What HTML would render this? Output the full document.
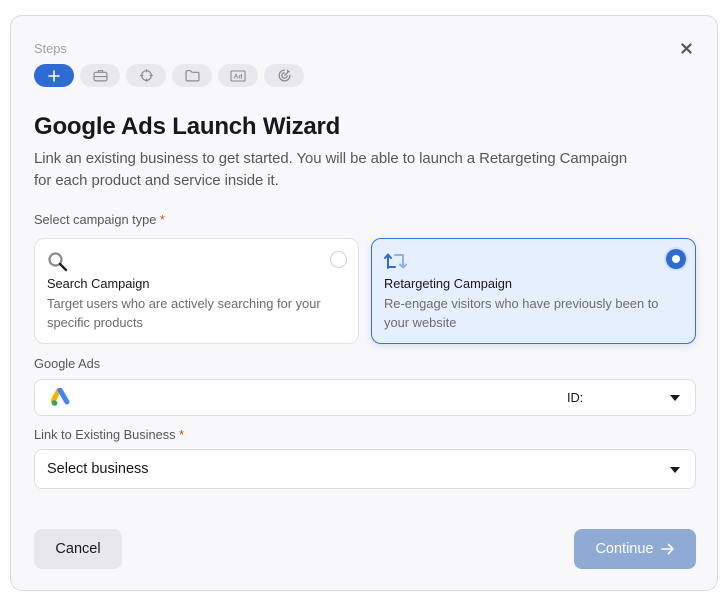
<!DOCTYPE html>
<html><head><meta charset="utf-8">
<style>
*{box-sizing:border-box;margin:0;padding:0}
body{width:720px;height:593px;background:#fff;font-family:"Liberation Sans",sans-serif;position:relative;overflow:hidden;color:#18181b}
.modal{position:absolute;left:10px;top:15px;width:708px;height:576px;background:#f8f8fb;border:1px solid #dcdce0;border-radius:12px}
.a{position:absolute}
.pill{position:absolute;top:64px;width:40px;height:23px;border-radius:12px;background:#e8e8ee;display:flex;align-items:center;justify-content:center}
.card{position:absolute;top:238px;height:106px;border-radius:10px;border:1px solid #e2e2e6;background:#fff}
.ct{position:absolute;left:12px;top:37px;font-size:12.8px;color:#18181b}
.cd{position:absolute;left:12px;top:55px;font-size:12.9px;line-height:19px;color:#6b6b73;width:290px}
.lbl{position:absolute;left:34px;font-size:12.8px;color:#56565e}
.star{color:#d9481b}
.sel{position:absolute;left:34px;width:662px;background:#fff;border:1px solid #dedee2;border-radius:8px}
.tri{position:absolute;right:15px;width:0;height:0;border-left:5px solid transparent;border-right:5px solid transparent;border-top:6px solid #18181b}
</style></head><body>
<div class="modal"></div>
<div class="a" style="left:34px;top:41px;font-size:12.8px;color:#a0a0a8">Steps</div>
<svg class="a" style="left:681px;top:43px" width="11" height="11" viewBox="0 0 11 11"><path d="M1.5 1.5L9.5 9.5M9.5 1.5L1.5 9.5" stroke="#555" stroke-width="2.2" stroke-linecap="round"/></svg>
<div class="pill" style="left:34px;background:#2f6bd4"><svg width="12" height="12" viewBox="0 0 12 12"><path d="M6 1v10M1 6h10" stroke="#fff" stroke-width="1.6" stroke-linecap="round"/></svg></div>
<div class="pill" style="left:80px"><svg width="15" height="13" viewBox="0 0 14 12"><rect x="1" y="3" width="12" height="8" rx="1.5" fill="none" stroke="#8a8a92" stroke-width="1.1"/><path d="M5 3V1.5h4V3M1 7h12" stroke="#8a8a92" stroke-width="1.1" fill="none"/></svg></div>
<div class="pill" style="left:126px"><svg width="15" height="15" viewBox="0 0 14 14"><circle cx="7" cy="7" r="4.5" fill="none" stroke="#8a8a92" stroke-width="1.1"/><path d="M7 1v3M7 10v3M1 7h3M10 7h3" stroke="#8a8a92" stroke-width="1.1"/></svg></div>
<div class="pill" style="left:172px"><svg width="15" height="13" viewBox="0 0 14 12"><path d="M1 2.5a1 1 0 0 1 1-1h3l1.5 1.5H12a1 1 0 0 1 1 1V10a1 1 0 0 1-1 1H2a1 1 0 0 1-1-1z" fill="none" stroke="#8a8a92" stroke-width="1.1"/></svg></div>
<div class="pill" style="left:218px"><svg width="16" height="12" viewBox="0 0 16 12"><rect x="1" y="1" width="14" height="10" rx="1" fill="none" stroke="#8a8a92" stroke-width="1.1"/><text x="8" y="8.5" font-size="6.5" font-family="Liberation Sans" font-weight="bold" fill="#8a8a92" text-anchor="middle">Ad</text></svg></div>
<div class="pill" style="left:264px"><svg width="15" height="15" viewBox="0 0 14 14"><path d="M12 6.5A5 5 0 1 1 7.5 2" fill="none" stroke="#8a8a92" stroke-width="1.2"/><path d="M9.5 6.8A2.5 2.5 0 1 1 7.2 4.5" fill="none" stroke="#8a8a92" stroke-width="1.2"/><path d="M7 7L11 3M10 1.5v2h2" stroke="#8a8a92" stroke-width="1.2" fill="none"/></svg></div>
<div class="a" style="left:34px;top:113px;font-size:24px;font-weight:bold;letter-spacing:-0.2px;color:#18181b">Google Ads Launch Wizard</div>
<div class="a" style="left:34px;top:148px;font-size:14.9px;line-height:22px;color:#56565e;width:660px;letter-spacing:-0.05px">Link an existing business to get started. You will be able to launch a Retargeting Campaign<br>for each product and service inside it.</div>
<div class="lbl" style="top:212px">Select campaign type <span class="star">*</span></div>
<div class="card" style="left:34px;width:325px">
 <svg class="a" style="left:12px;top:12px" width="22" height="22" viewBox="0 0 22 22"><circle cx="8.5" cy="8.5" r="6" fill="none" stroke="#8a8a8a" stroke-width="2.2"/><path d="M13 13l6 6" stroke="#222" stroke-width="2.4" stroke-linecap="round"/></svg>
 <div class="a" style="left:295px;top:12px;width:17px;height:17px;border-radius:50%;border:1px solid #cfcfd4;background:#fff"></div>
 <div class="ct">Search Campaign</div>
 <div class="cd">Target users who are actively searching for your specific products</div>
</div>
<div class="card" style="left:371px;width:325px;background:#e6effd;border-color:#3a73d8;box-shadow:0 2px 8px rgba(60,110,210,.18)">
 <svg class="a" style="left:12px;top:13px" width="24" height="18" viewBox="0 0 24 18"><path d="M4 16V3M1 6l3-3.5L7 6M4 15h7" fill="none" stroke="#2f6bd4" stroke-width="2" stroke-linecap="round" stroke-linejoin="round"/><path d="M11 3h8v12M16 12.5l3 3 3-3" fill="none" stroke="#8fb0e8" stroke-width="2" stroke-linecap="round" stroke-linejoin="round"/></svg>
 <div class="a" style="left:294px;top:10px;width:20px;height:20px;border-radius:50%;background:#2f6bd4;box-shadow:0 0 0 2px #d3e1f8"><div style="position:absolute;left:6px;top:6px;width:8px;height:8px;border-radius:50%;background:#fff"></div></div>
 <div class="ct">Retargeting Campaign</div>
 <div class="cd">Re-engage visitors who have previously been to your website</div>
</div>
<div class="lbl" style="top:356px">Google Ads</div>
<div class="sel" style="top:379px;height:37px">
 <svg class="a" style="left:16px;top:8px" width="20" height="19" viewBox="0 0 20 19"><path d="M8 2l-6 11" stroke="#f4b400" stroke-width="5" stroke-linecap="round"/><path d="M9 2l7 12" stroke="#4285f4" stroke-width="5" stroke-linecap="round"/><circle cx="3.5" cy="15" r="2.8" fill="#34a853"/></svg>
 <div class="a" style="left:532px;top:10px;font-size:12.8px;color:#18181b">ID:</div>
 <div class="tri" style="top:15px"></div>
</div>
<div class="lbl" style="top:427px">Link to Existing Business <span class="star">*</span></div>
<div class="sel" style="top:449px;height:40px">
 <div class="a" style="left:12px;top:11px;font-size:14.5px;color:#18181b">Select business</div>
 <div class="tri" style="top:17px"></div>
</div>
<div class="a" style="left:34px;top:529px;width:88px;height:40px;border-radius:8px;background:#e8e8ec;font-size:14.5px;color:#18181b;display:flex;align-items:center;justify-content:center">Cancel</div>
<div class="a" style="left:574px;top:529px;width:122px;height:40px;border-radius:8px;background:#8faad4;font-size:14.5px;color:#fff;display:flex;align-items:center;justify-content:center">Continue&nbsp;<svg width="14" height="12" viewBox="0 0 14 12" style="margin-left:3px"><path d="M1 6h11M7.5 1.5L12 6l-4.5 4.5" fill="none" stroke="#fff" stroke-width="1.6" stroke-linecap="round" stroke-linejoin="round"/></svg></div>
</body></html>
